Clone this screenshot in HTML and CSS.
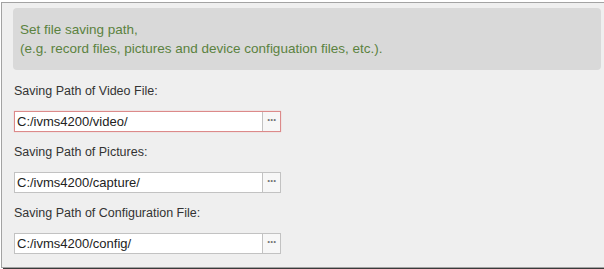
FILE: index.html
```html
<html lang="en">
<head>
    <meta charset="utf-8">
    <link rel="stylesheet" href="styles.css">
</head>
<body>
<div class="panel">
    <div class="tip">
        <p>Set file saving path,</p>
        <p>(e.g. record files, pictures and device configuation files, etc.).</p>
    </div>
    <div class="group">
        <label>Saving Path of Video File:</label>
        <div class="path focus">
            <span class="value">C:/ivms4200/video/</span>
            <span class="browse">&middot;&middot;&middot;</span>
        </div>
    </div>
    <div class="group">
        <label>Saving Path of Pictures:</label>
        <div class="path">
            <span class="value">C:/ivms4200/capture/</span>
            <span class="browse">&middot;&middot;&middot;</span>
        </div>
    </div>
    <div class="group">
        <label>Saving Path of Configuration File:</label>
        <div class="path">
            <span class="value">C:/ivms4200/config/</span>
            <span class="browse">&middot;&middot;&middot;</span>
        </div>
    </div>
</div>
</body>
</html>
```

FILE: styles.css
```css
* {
    margin: 0;
    padding: 0;
}
body {
    background-color: #fff;
    font-family: "Liberation Sans", Arial, sans-serif;
}
.panel {
    width: 588px;
    height: 259px;
    margin: 2px 0 0 1px;
    padding: 5px 8px 0 11px;
    border: 1px solid #a3a3a3;
    background-color: #efefef;
    box-shadow: 2px 2px 0 #3a3a3a;
}
.tip {
    height: 62px;
    padding: 12px 0 0 7px;
    box-sizing: border-box;
    border-radius: 4px;
    background-color: #d9d9d9;
    color: #5b8240;
    font-size: 13.5px;
    line-height: 19px;
}
.group {
    margin-top: 11px;
}
.group + .group {
    margin-top: 10px;
}
.group label {
    display: block;
    height: 20px;
    line-height: 20px;
    padding-left: 1px;
    font-size: 12.5px;
    color: #333;
}
.path {
    display: flex;
    width: 265px;
    height: 19px;
    margin-top: 10px;
    margin-left: 1px;
    border: 1px solid #c2c2c2;
    background-color: #fff;
}
.path.focus {
    border-color: #dc8a8a;
    box-shadow: 0 0 1px #f0b0b0;
}
.value {
    flex: 1;
    padding-left: 2px;
    line-height: 20px;
    font-size: 13px;
    color: #222;
}
.browse {
    width: 17px;
    border-left: 1px solid #c2c2c2;
    background-color: #f7f7f7;
    color: #777;
    font-size: 12px;
    font-weight: bold;
    line-height: 17px;
    text-align: center;
    letter-spacing: -1px;
}
```
